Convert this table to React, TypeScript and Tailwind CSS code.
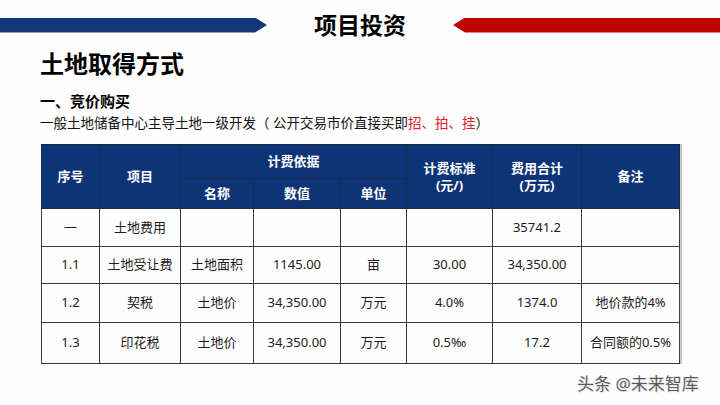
import React from "react";

const font = { fontFamily: '"Noto Sans", "Noto Sans CJK SC", sans-serif' };

const rows = [
  { h: "h-[38px]", c: ["一", "土地费用", "", "", "", "", "35741.2", ""] },
  { h: "h-[37px]", c: ["1.1", "土地受让费", "土地面积", "1145.00", "亩", "30.00", "34,350.00", ""] },
  { h: "h-[39px]", c: ["1.2", "契税", "土地价", "34,350.00", "万元", "4.0%", "1374.0", "地价款的4%"] },
  { h: "h-[41px]", c: ["1.3", "印花税", "土地价", "34,350.00", "万元", "0.5‰", "17.2", "合同额的0.5%"] },
];

export default function App() {
  return (
    <div
      className="relative w-[720px] h-[405px] overflow-hidden bg-[#fefefe] text-[#111]"
      style={font}
    >
      <div className="flex items-center h-[50px]">
        <div className="w-[267px] h-[15px] bg-[#12387a] [clip-path:polygon(0_0,calc(100%_-_12px)_0,100%_50%,calc(100%_-_12px)_100%,0_100%)]" />
        <div className="flex-1 text-center text-[23px] font-bold leading-[28px] text-black">
          项目投资
        </div>
        <div className="w-[267px] h-[15px] bg-[#c00000] [clip-path:polygon(12px_0,100%_0,100%_100%,12px_100%,0_50%)]" />
      </div>

      <div className="pl-[40px]">
        <div className="text-[24px] font-bold leading-[28px] text-black">土地取得方式</div>
        <div className="mt-[13px] text-[15px] font-bold leading-[20px] text-black">一、竞价购买</div>
        <div className="mt-[2px] text-[13.5px] leading-[20px] text-[#111] tracking-[0px]">
          一般土地储备中心主导土地一级开发（ 公开交易市价直接买即
          <span className="text-[#e02020]">招、拍、挂</span>）
        </div>
      </div>

      <div className="pl-[41px] mt-[11px]">
        <table className="table-fixed border-collapse w-[638px] text-[13px] text-center shadow-[2px_0_0_#c8c8c8]">
          <colgroup>
            <col className="w-[58px]" />
            <col className="w-[81px]" />
            <col className="w-[73px]" />
            <col className="w-[87px]" />
            <col className="w-[66px]" />
            <col className="w-[86px]" />
            <col className="w-[89px]" />
            <col className="w-[98px]" />
          </colgroup>
          <thead className="bg-[#0e3478] text-white font-bold">
            <tr className="h-[34px]">
              <th rowSpan={2} className="border border-[#1c2a44] align-middle">序号</th>
              <th rowSpan={2} className="border border-[#1c2a44] align-middle">项目</th>
              <th colSpan={3} className="border border-[#1c2a44] align-middle">计费依据</th>
              <th rowSpan={2} className="border border-[#1c2a44] align-middle leading-[17px]">
                <div>计费标准</div>
                <div>(元/)</div>
              </th>
              <th rowSpan={2} className="border border-[#1c2a44] align-middle leading-[17px]">
                <div>费用合计</div>
                <div>(万元)</div>
              </th>
              <th rowSpan={2} className="border border-[#1c2a44] align-middle">备注</th>
            </tr>
            <tr className="h-[30px]">
              <th className="border border-[#1c2a44]">名称</th>
              <th className="border border-[#1c2a44]">数值</th>
              <th className="border border-[#1c2a44]">单位</th>
            </tr>
          </thead>
          <tbody className="text-[#1a1a1a]">
            {rows.map((r, i) => (
              <tr key={i} className={r.h}>
                {r.c.map((t, j) => (
                  <td key={j} className="border border-[#3a3a3a] font-normal">
                    {t}
                  </td>
                ))}
              </tr>
            ))}
          </tbody>
        </table>
      </div>

      <div className="absolute left-[577px] top-[373px] text-[17px] leading-[22px] text-[#5a5a5a] [text-shadow:0_0_2px_#fff,1px_1px_1px_#ddd]">
        头条 @未来智库
      </div>
    </div>
  );
}
